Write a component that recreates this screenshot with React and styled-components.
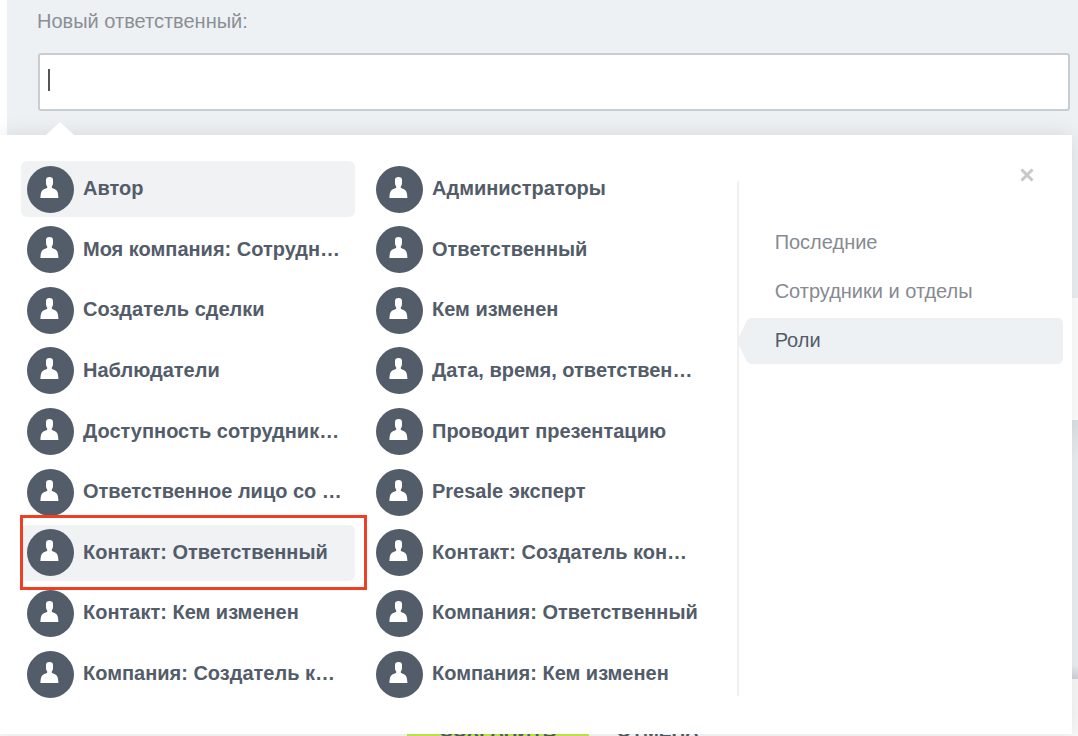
import styled, { createGlobalStyle } from 'styled-components';

const GlobalStyle = createGlobalStyle`
  * {
    box-sizing: border-box;
  }

  body {
    margin: 0;
    background: #fff;
    font-family: 'Liberation Sans', Arial, sans-serif;
    font-size: 20px;
    line-height: 24px;
  }

  button, input {
    font: inherit;
  }
`

const Page = styled.div`
  position: relative;
  display: flex;
  flex-direction: column;
  height: 100vh;
  overflow: hidden;
`

const Section = styled.section`
  flex: none;
  height: 298px;
  margin-left: 7px;
  padding: 9px 8px 0 30px;
  background: #edf1f4;
`

const Label = styled.label`
  display: block;
  margin-bottom: 20px;
  color: #8b8f94;
`

const Field = styled.div`
  display: flex;
  align-items: center;
  height: 58px;
  margin-left: 1px;
  padding: 0 8px 4px;
  border: 2px solid #c6cdd3;
  border-radius: 3px;
  background: #fff;
`

const Caret = styled.span`
  flex: none;
  width: 2px;
  height: 22px;
  background: #555;
`

const Input = styled.input`
  flex: 1;
  min-width: 0;
  border: none;
  outline: none;
  background: none;
  caret-color: transparent;
`

const Panel = styled.div`
  flex: 1;
  margin: 122px 0 0 7px;
  background: linear-gradient(#dde2e6, #edf1f4 40px, #edf1f4 245px, #d0d4d8);
`

const Footer = styled.footer`
  display: flex;
  flex: none;
  justify-content: center;
  gap: 28px;
  height: 57px;
  padding-left: 28px;
  background: #f9f9f9;
`

const FooterButton = styled.button`
  flex: none;
  height: 64px;
  padding: 39px ${props => (props.$primary ? 32 : 0)}px 0;
  border: none;
  background: ${props => (props.$primary ? '#c4ec4c' : 'none')};
  color: #535c69;
  font-size: 19px;
  font-weight: bold;
  line-height: 24px;
  text-transform: uppercase;
`

const Popup = styled.div`
  position: absolute;
  top: 135px;
  right: 6px;
  left: 0;
  display: flex;
  padding: 26px 9px 32px 21px;
  background: #fff;
  box-shadow: 0 0 22px rgba(0, 0, 0, .1);

  &::before {
    content: '';
    position: absolute;
    top: -13px;
    left: 46px;
    border: solid transparent;
    border-width: 0 14px 13px;
    border-bottom-color: #fff;
  }
`

const Roles = styled.ul`
  display: grid;
  flex: 717;
  grid-template-columns: 334px 334px;
  grid-auto-rows: 56px;
  column-gap: 15px;
  align-content: space-between;
  min-width: 0;
  height: 541px;
  margin: 0;
  padding: 0;
  list-style: none;
`

const Role = styled.li`
  position: relative;

  ${props => props.$marked && `
    &::after {
      content: '';
      position: absolute;
      inset: -10px -12px -9px -1px;
      border: 3px solid #ee3e24;
      pointer-events: none;
    }
  `}
`

const RoleButton = styled.button`
  display: flex;
  align-items: center;
  gap: 9px;
  width: 100%;
  height: 56px;
  padding: 0 6px;
  border: none;
  border-radius: 6px;
  background: ${props => (props.$active ? '#f0f2f4' : 'none')};
  color: #535c69;
  font-weight: bold;
  text-align: left;
  white-space: nowrap;
`

const RoleName = styled.span`
  padding-bottom: 2px;
`

const Avatar = styled.svg`
  flex: none;
  width: 47px;
  height: 47px;
`

const Side = styled.aside`
  display: flex;
  flex: 325;
  flex-direction: column;
  min-width: 0;
  margin: 20px 0 6px;
  border-left: 2px solid #f0f0f0;
`

const Close = styled.button`
  align-self: flex-end;
  width: 32px;
  height: 32px;
  margin: -22px 20px 29px 0;
  padding: 0;
  border: none;
  background: none;
  line-height: 0;
`

const Tabs = styled.nav`
  display: flex;
  flex-direction: column;
  gap: 3px;
`

const Tab = styled.button`
  position: relative;
  height: 46px;
  margin-left: 8px;
  padding: 0 28px 2px;
  border: none;
  border-radius: 5px;
  background: ${props => (props.$active ? '#edf1f4' : 'none')};
  color: ${props => (props.$active ? '#535c69' : '#868a92')};
  text-align: left;
`

const TabArrow = styled.svg`
  position: absolute;
  top: 0;
  left: -9px;
  width: 16px;
  height: 46px;
`

const roles = [
  'Автор', 'Администраторы',
  'Моя компания: Сотрудн…', 'Ответственный',
  'Создатель сделки', 'Кем изменен',
  'Наблюдатели', 'Дата, время, ответствен…',
  'Доступность сотрудник…', 'Проводит презентацию',
  'Ответственное лицо со …', 'Presale эксперт',
  'Контакт: Ответственный', 'Контакт: Создатель кон…',
  'Контакт: Кем изменен', 'Компания: Ответственный',
  'Компания: Создатель к…', 'Компания: Кем изменен',
]

const selected = ['Автор', 'Контакт: Ответственный']
const tabs = ['Последние', 'Сотрудники и отделы', 'Роли']

function Person() {
  return <Avatar viewBox="0 0 47 47" aria-hidden="true">
    <circle cx="23.5" cy="23.5" r="23.5" fill="#535c69" />
    <path
      fill="#fff"
      d="M22.500 11C24.900 11 26 12 26 14v3c0 1.500-.5 2.700-1.200 3.500v1.300c1.500.9 4 1.600 5 3 1.100 1.600 1.500 4 1.600 7.200H13.400c.1-3.200.5-5.600 1.600-7.200 1-1.400 3.700-2.100 5.200-3v-1.300c-.7-.8-1.200-2-1.200-3.500v-3c0-2 1.100-3 3.500-3z"
    />
  </Avatar>
}

export default function App() {
  return <>
    <GlobalStyle />
    <Page>
      <Section>
        <Label htmlFor="responsible">Новый ответственный:</Label>
        <Field>
          <Caret />
          <Input id="responsible" type="text" autoComplete="off" />
        </Field>
      </Section>
      <Panel />
      <Footer>
        <FooterButton type="button" $primary>Сохранить</FooterButton>
        <FooterButton type="button">Отмена</FooterButton>
      </Footer>
      <Popup>
        <Roles>
          {roles.map(role => (
            <Role key={role} $marked={role === 'Контакт: Ответственный'}>
              <RoleButton type="button" $active={selected.includes(role)}>
                <Person />
                <RoleName>{role}</RoleName>
              </RoleButton>
            </Role>
          ))}
        </Roles>
        <Side>
          <Close type="button" aria-label="Закрыть">
            <svg width="14" height="14" viewBox="0 0 14 14">
              <path d="M1.500 1.500l11 11M12.500 1.500l-11 11" stroke="#c8c8c8" strokeWidth="3" />
            </svg>
          </Close>
          <Tabs>
            {tabs.map(tab => (
              <Tab key={tab} type="button" $active={tab === 'Роли'}>
                {tab === 'Роли' && <TabArrow viewBox="0 0 16 46" aria-hidden="true">
                  <path fill="#edf1f4" d="M16 0h-2q-4 0-6 4L1 19q-2 4 0 8l7 15q2 4 6 4h2z" />
                </TabArrow>}
                {tab}
              </Tab>
            ))}
          </Tabs>
        </Side>
      </Popup>
    </Page>
  </>
}
